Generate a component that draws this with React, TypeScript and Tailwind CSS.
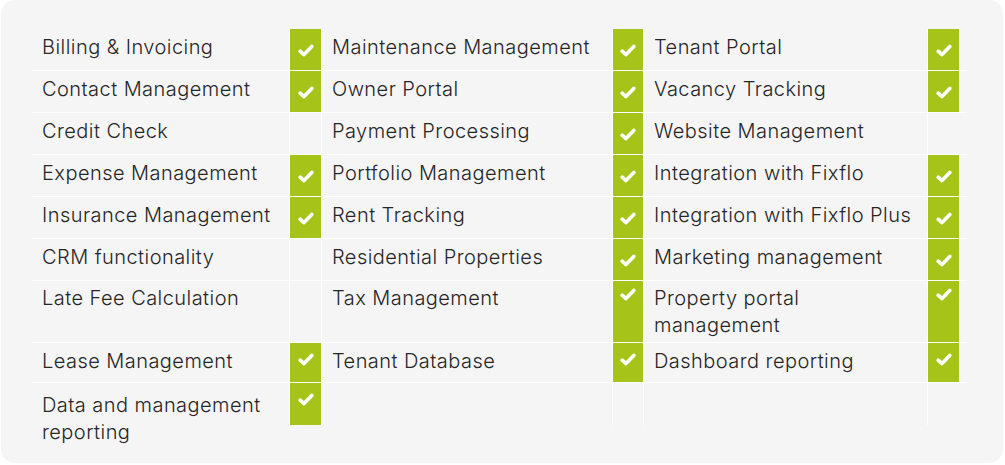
import React from "react";

type Cell = { label: string; checked: boolean } | null;

const rows: { h: string; checkPad: string; textPad: string; cells: Cell[] }[] = [
    { h: "h-[42px]", checkPad: "pt-[15px]", textPad: "pt-[5px]", cells: [
        { label: "Billing & Invoicing", checked: true },
        { label: "Maintenance Management", checked: true },
        { label: "Tenant Portal", checked: true },
    ] },
    { h: "h-[42px]", checkPad: "pt-[15px]", textPad: "pt-[5px]", cells: [
        { label: "Contact Management", checked: true },
        { label: "Owner Portal", checked: true },
        { label: "Vacancy Tracking", checked: true },
    ] },
    { h: "h-[42px]", checkPad: "pt-[15px]", textPad: "pt-[5px]", cells: [
        { label: "Credit Check", checked: false },
        { label: "Payment Processing", checked: true },
        { label: "Website Management", checked: false },
    ] },
    { h: "h-[42px]", checkPad: "pt-[15px]", textPad: "pt-[5px]", cells: [
        { label: "Expense Management", checked: true },
        { label: "Portfolio Management", checked: true },
        { label: "Integration with Fixflo", checked: true },
    ] },
    { h: "h-[42px]", checkPad: "pt-[15px]", textPad: "pt-[5px]", cells: [
        { label: "Insurance Management", checked: true },
        { label: "Rent Tracking", checked: true },
        { label: "Integration with Fixflo Plus", checked: true },
    ] },
    { h: "h-[42px]", checkPad: "pt-[15px]", textPad: "pt-[5px]", cells: [
        { label: "CRM functionality", checked: false },
        { label: "Residential Properties", checked: true },
        { label: "Marketing management", checked: true },
    ] },
    { h: "h-[62px]", checkPad: "pt-[7px]", textPad: "pt-[4px]", cells: [
        { label: "Late Fee Calculation", checked: false },
        { label: "Tax Management", checked: true },
        { label: "Property portal management", checked: true },
    ] },
    { h: "h-[40px]", checkPad: "pt-[10px]", textPad: "pt-[5px]", cells: [
        { label: "Lease Management", checked: true },
        { label: "Tenant Database", checked: true },
        { label: "Dashboard reporting", checked: true },
    ] },
    { h: "h-[42px]", checkPad: "pt-[10px]", textPad: "pt-[9px]", cells: [
        { label: "Data and management reporting", checked: true },
        null,
        null,
    ] },
];

const textW = ["w-[257px]", "w-[291px] border-l border-white", "w-[284px] border-l border-white"];
const checkW = ["w-[32px]", "w-[31px]", "w-[32px]"];

function Check() {
    return (
        <svg width="16" height="13" viewBox="0 0 16 13" className="mx-auto block">
            <path d="M2.2 7.2 L6 10.6 L13.8 2.4" fill="none" stroke="white" strokeWidth="3.6" strokeLinecap="round" strokeLinejoin="round" />
        </svg>
    );
}

export default function App() {
    return (
        <div className="w-[1005px] h-[465px] bg-white pl-[1px] pb-[2px] pr-[2px]">
            <div className="w-full h-full bg-[#f5f5f5] rounded-[14px] pl-[31px] pt-[29px]" style={{ fontFamily: "Inter, 'Liberation Sans', sans-serif" }}>
                <div className="flex flex-col w-[935px]">
                    {rows.map((row, ri) => (
                        <div key={ri} className={`flex ${row.h} ${ri < rows.length - 1 ? "border-b border-white" : ""}`}>
                            {row.cells.map((cell, ci) => (
                                <React.Fragment key={ci}>
                                    <div className={`${textW[ci]} h-full pl-[10px] pr-2 ${row.textPad} text-[20px] font-light leading-[27px] tracking-[0.45px] text-[#262626]`}>
                                        {cell?.label}
                                    </div>
                                    <div className={`${checkW[ci]} h-full border-l border-white ${cell?.checked ? "bg-[#a6c31a]" : ""} ${row.checkPad}`}>
                                        {cell?.checked && <Check />}
                                    </div>
                                </React.Fragment>
                            ))}
                            <div className="w-[8px]" />
                        </div>
                    ))}
                </div>
            </div>
        </div>
    );
}
